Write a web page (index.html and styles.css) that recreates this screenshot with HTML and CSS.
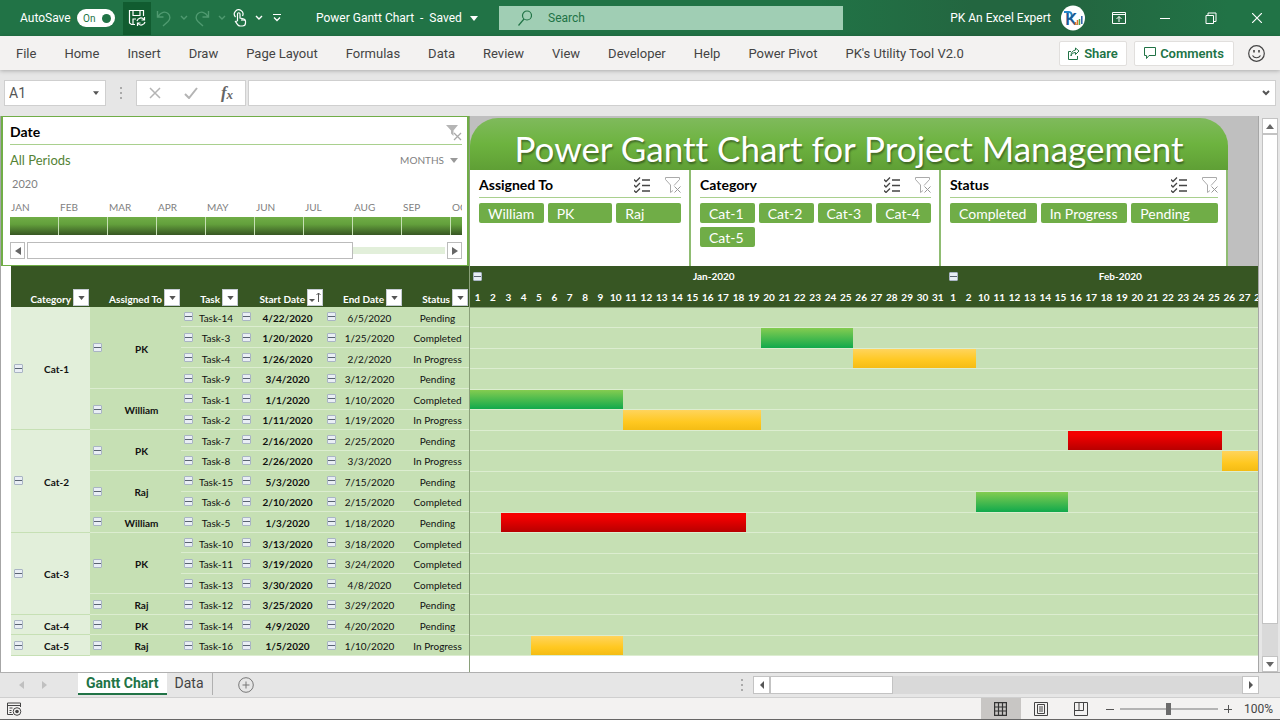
FILE: index.html
```html
<!DOCTYPE html>
<html lang="en">
<head>
  <meta charset="UTF-8">
  <title>Power Gantt Chart</title>
  <link rel="stylesheet" href="styles.css">
</head>
<body>

<svg class="defs" aria-hidden="true">
  <symbol id="chevron" viewBox="0 0 8 6"><path d="M1 1l3 3 3-3" fill="none" stroke="currentColor" stroke-width="1.4"/></symbol>
  <symbol id="arrow" viewBox="0 0 8 5"><path d="M0 0h8L4 5z" fill="currentColor"/></symbol>
  <symbol id="checks" viewBox="0 0 16 16">
    <path d="M0 2.500l2 2L6 .5M0 8l2 2 4-4M0 13.500l2 2 4-4M8 3h8M8 8.500h8M8 14h8" fill="none" stroke="#444" stroke-width="1.3"/>
  </symbol>
  <symbol id="funnel" viewBox="0 0 16 16">
    <path d="M.5.5h14v2L9 8.500M.5.5v2L5.500 8v7.500L8 13.500" fill="none" stroke="#aaa"/>
    <path d="M9.500 9.500l6 6M15.500 9.500l-6 6" stroke="#999"/>
  </symbol>
</svg>

<header class="titlebar">
  <div class="quick">
    <label for="autosave">AutoSave</label>
    <span class="switch"><input type="checkbox" id="autosave" checked><span>On</span></span>
    <button class="save" aria-label="Save">
      <svg width="18" height="18" viewBox="0 0 18 18" fill="none" stroke="#fff" stroke-width="1.2">
        <path d="M7 15.500H3.500L1.500 14V1.500h14V7M5 1.500v5h7v-5M5 15v-5h3"/>
        <path d="M9 12a4 4 0 0 1 7-1.500M16.500 8v3h-3M17 13a4 4 0 0 1-7 1.500M9.500 17v-3h3"/>
      </svg>
    </button>
    <button class="dim" aria-label="Undo">
      <svg width="16" height="17" viewBox="0 0 16 17" fill="none" stroke="currentColor" stroke-width="1.4"><path d="M1.500 1v6h6M2 6.500C5 2 9 1 12 3.500s2 6 0 8L7 16"/></svg>
      <svg width="8" height="6"><use href="#chevron"/></svg>
    </button>
    <button class="dim" aria-label="Redo">
      <svg width="16" height="17" viewBox="0 0 16 17" fill="none" stroke="currentColor" stroke-width="1.4"><path d="M14.500 1v6h-6M14 6.500C11 2 7 1 4 3.500s-2 6 0 8L9 16"/></svg>
      <svg width="8" height="6"><use href="#chevron"/></svg>
    </button>
    <button class="touch" aria-label="Touch mode">
      <svg width="14" height="18" viewBox="0 0 14 18" fill="none" stroke="#fff" stroke-width="1.2">
        <path d="M2.500 8a4.300 4.300 0 1 1 7-1"/>
        <path d="M4.500 12V5a1.200 1.200 0 0 1 2.500 0v4l4 1c1 .3 1.500 1 1.500 2v2c0 2-1.500 3-3 3H7c-2 0-3-2-4.500-4.500L4.500 12M9 9.500V12M11 10v2"/>
      </svg>
      <svg width="8" height="6"><use href="#chevron"/></svg>
    </button>
    <button class="customize" aria-label="Customize toolbar">
      <svg width="8" height="8" viewBox="0 0 8 8"><path d="M0 .5h8" stroke="#fff"/><path d="M1 3.500l3 3 3-3" fill="none" stroke="#fff" stroke-width="1.300"/></svg>
    </button>
  </div>
  <button class="docname">Power Gantt Chart&nbsp; - &nbsp;Saved <svg width="8" height="5"><use href="#arrow"/></svg></button>
  <div class="search">
    <svg width="14" height="16" viewBox="0 0 14 16" fill="none" stroke="#217346" stroke-width="1.200"><circle cx="9" cy="5.500" r="4.500"/><path d="M6 9L.5 15.500"/></svg>
    <input type="text" placeholder="Search" aria-label="Search">
  </div>
  <div class="account">
    <span>PK An Excel Expert</span>
    <svg width="24" height="26" viewBox="0 0 24 26">
      <ellipse cx="12" cy="13" rx="12" ry="12.500" fill="#fff"/>
      <path d="M3 7h4c4-1 6 6 0 7" fill="none" stroke="#2386c8" stroke-width="2"/>
      <text x="4" y="20" font-family="Lato" font-size="17" font-weight="700" fill="#1c5a94">K</text>
      <path d="M14.500 20v-3M16.500 20v-5" stroke="#e2762a" stroke-width="1.500"/>
      <path d="M18.500 20v-6" stroke="#4ca64c" stroke-width="1.500"/>
      <path d="M20.800 19v-8" stroke="#2b5fa8" stroke-width="1.500"/>
    </svg>
  </div>
  <div class="window-buttons">
    <button aria-label="Ribbon display options"><svg width="14" height="12" viewBox="0 0 14 12" fill="none" stroke="#fff"><path d="M.5.5h13v11H.5zM.5 2.500h13M7 10V4.500M4.500 7L7 4.500 9.500 7"/></svg></button>
    <button aria-label="Minimize"><svg width="10" height="10" viewBox="0 0 10 10"><path d="M0 5.500h10" stroke="#fff"/></svg></button>
    <button aria-label="Restore"><svg width="12" height="12" viewBox="0 0 12 12" fill="none" stroke="#fff"><path d="M1 3.500h7.500v8H1zM3 3V1h8v8.500H9"/></svg></button>
    <button aria-label="Close"><svg width="10" height="10" viewBox="0 0 10 10"><path d="M0 0l10 10M10 0L0 10" stroke="#fff" stroke-width="1.200"/></svg></button>
  </div>
</header>

<nav class="ribbon">
  <a href="#">File</a>
  <a href="#">Home</a>
  <a href="#">Insert</a>
  <a href="#">Draw</a>
  <a href="#">Page Layout</a>
  <a href="#">Formulas</a>
  <a href="#">Data</a>
  <a href="#">Review</a>
  <a href="#">View</a>
  <a href="#">Developer</a>
  <a href="#">Help</a>
  <a href="#">Power Pivot</a>
  <a href="#">PK's Utility Tool V2.0</a>
  <div class="ribbon-right">
    <button class="share"><svg width="12" height="13" viewBox="0 0 12 13" fill="none" stroke="#217346"><path d="M3 4.500H.5v8h9V9M7.500 1L11 4 7.500 7.500v-2C5 5.500 3.500 7 3 9c0-3.500 1.500-5.500 4.500-6z"/></svg>Share</button>
    <button class="comments"><svg width="12" height="12" viewBox="0 0 12 12" fill="none" stroke="#217346"><path d="M.5.5h11v8H5l-2.500 3v-3h-2z"/></svg>Comments</button>
    <button class="smile" aria-label="Feedback"><svg width="17" height="17" viewBox="0 0 17 17" fill="none" stroke="#444" stroke-width="1.200"><circle cx="8.500" cy="8.500" r="7.800"/><path d="M4.500 10.500c2 3 6 3 8 0"/><path d="M6 5v2.500M11 5v2.500" stroke-width="1.600"/></svg></button>
  </div>
</nav>

<div class="formula-row">
  <div class="namebox">
    <input type="text" value="A1" aria-label="Name box">
    <svg width="6" height="4"><use href="#arrow"/></svg>
  </div>
  <svg class="grip" width="4" height="14" viewBox="0 0 4 14" fill="#aaa"><path d="M1 1h2v2H1zM1 6h2v2H1zM1 11h2v2H1z"/></svg>
  <div class="fx">
    <button aria-label="Cancel"><svg width="12" height="12" viewBox="0 0 12 12"><path d="M1 1l10 10M11 1L1 11" stroke="#b4b4b4" stroke-width="1.500"/></svg></button>
    <button aria-label="Enter"><svg width="14" height="12" viewBox="0 0 14 12"><path d="M1 7l4 4 8-10" fill="none" stroke="#b4b4b4" stroke-width="2"/></svg></button>
    <button aria-label="Insert function" class="fn">f<small>x</small></button>
  </div>
  <div class="formula">
    <input type="text" aria-label="Formula bar">
    <svg width="8" height="6"><path d="M1 1l3 3 3-3" fill="none" stroke="#555" stroke-width="2"/></svg>
  </div>
</div>

<main class="sheet">
  <section class="left-pane">
    <div class="timeline">
      <div class="panel-head">
        <h2>Date</h2>
        <button aria-label="Clear filter"><svg width="16" height="17" viewBox="0 0 16 17"><path d="M0 1h12L7.500 6.500V12L5 9.500v-3z" fill="#b5b5b5"/><path d="M8 9l7 7M15 9l-7 7" stroke="#aaa" stroke-width="1.300"/></svg></button>
      </div>
      <div class="period">
        <span class="all">All Periods</span>
        <button>MONTHS <svg width="8" height="5"><use href="#arrow"/></svg></button>
      </div>
      <div class="year">2020</div>
      <div class="months" id="months"></div>
      <div class="timeline-scroll">
        <button aria-label="Scroll left"><svg width="6" height="8"><path d="M6 0v8L0 4z" fill="#666"/></svg></button>
        <span class="thumb"></span>
        <span class="rest"></span>
        <button aria-label="Scroll right"><svg width="6" height="8"><path d="M0 0v8l6-4z" fill="#666"/></svg></button>
      </div>
    </div>
    <table class="pivot">
      <colgroup><col class="c-cat"><col class="c-who"><col class="c-task"><col class="c-start"><col class="c-end"><col class="c-status"></colgroup>
      <thead>
        <tr id="pivotHead"></tr>
      </thead>
      <tbody id="pivotBody"></tbody>
    </table>
  </section>

  <section class="right-pane">
    <div class="dashboard">
      <h1>Power Gantt Chart for Project Management</h1>
      <div class="slicers" id="slicers"></div>
    </div>
    <div class="gantt">
      <div class="gantt-head">
        <div class="month jan"><button class="toggle" aria-label="Collapse"></button><span>Jan-2020</span></div>
        <div class="month feb"><button class="toggle" aria-label="Collapse"></button><span>Feb-2020</span></div>
      </div>
      <div class="days" id="days"></div>
      <div class="bars" id="bars"></div>
    </div>
  </section>

  <div class="vscroll">
    <button aria-label="Scroll up"><svg width="8" height="5"><path d="M0 5h8L4 0z" fill="#666"/></svg></button>
    <span class="thumb"></span>
    <span class="rest"></span>
    <button aria-label="Scroll down"><svg width="8" height="5"><path d="M0 0h8L4 5z" fill="#666"/></svg></button>
  </div>
</main>

<div class="tabs">
  <button class="step" aria-label="Previous sheet"><svg width="5" height="8"><path d="M5 0v8L0 4z" fill="#c0c0c0"/></svg></button>
  <button class="step" aria-label="Next sheet"><svg width="5" height="8"><path d="M0 0v8l5-4z" fill="#c0c0c0"/></svg></button>
  <a href="#" class="tab active">Gantt Chart</a>
  <a href="#" class="tab">Data</a>
  <button class="add" aria-label="New sheet"><svg width="16" height="16" viewBox="0 0 16 16" fill="none" stroke="#777"><circle cx="8" cy="8" r="7.300"/><path d="M4.500 8h7M8 4.500v7"/></svg></button>
  <div class="hscroll">
    <svg class="grip" width="4" height="12" viewBox="0 0 4 12" fill="#aaa"><path d="M1 0h2v2H1zM1 5h2v2H1zM1 10h2v2H1z"/></svg>
    <button aria-label="Scroll left"><svg width="4" height="8"><path d="M4 0v8L0 4z" fill="#555"/></svg></button>
    <span class="thumb"></span>
    <span class="rest"></span>
    <button aria-label="Scroll right"><svg width="4" height="8"><path d="M0 0v8l4-4z" fill="#555"/></svg></button>
  </div>
</div>

<footer class="status">
  <button class="macro" aria-label="Record macro"><svg width="15" height="14" viewBox="0 0 15 14" fill="none" stroke="#444"><path d="M6 12.500H.5V1h13v4M.5 3.500h13M2.500 6h3M2.500 8.500h2M2.500 10.500h2"/><circle cx="10" cy="9.500" r="3.800"/><circle cx="10" cy="9.500" r="1.800" fill="#444" stroke="none"/></svg></button>
  <div class="views">
    <button class="on" aria-label="Normal"><svg width="13" height="14" viewBox="0 0 13 14" fill="none" stroke="#333" stroke-width="1.200"><path d="M.6.6h11.800v12.800H.6zM4.500 1v12M8.500 1v12M1 5h11M1 9h11"/></svg></button>
    <button aria-label="Page layout"><svg width="14" height="14" viewBox="0 0 14 14" fill="none" stroke="#444"><path d="M.5.5h13v13H.5zM3.500 2.500h7v9h-7zM5 5h4M5 7h4M5 9h4"/></svg></button>
    <button aria-label="Page break preview"><svg width="14" height="14" viewBox="0 0 14 14" fill="none" stroke="#444"><path d="M.5.5h13v13H.5zM1 8.500h8.500V1M5 1v7.500"/></svg></button>
  </div>
  <div class="zoom">
    <button aria-label="Zoom out"><svg width="8" height="8"><path d="M0 4.500h8" stroke="#555"/></svg></button>
    <input type="range" min="0" max="100" value="50" aria-label="Zoom">
    <button aria-label="Zoom in"><svg width="8" height="8"><path d="M0 4.500h8M4.500 0v8" stroke="#555"/></svg></button>
    <span>100%</span>
  </div>
</footer>

<script src="script.js"></script>
</body>
</html>
```
FILE: styles.css
```css
* {
  box-sizing: border-box;
}
body {
  margin: 0;
  height: 100vh;
  display: flex;
  flex-direction: column;
  overflow: hidden;
  font-family: Roboto, "Open Sans", sans-serif;
  font-size: 12px;
  color: #444;
  background: #e6e6e6;
}
button, input {
  font: inherit;
  color: inherit;
  border: none;
  background: none;
  padding: 0;
  margin: 0;
  outline: none;
}
button {
  display: flex;
  align-items: center;
  justify-content: center;
  flex: none;
}
a {
  color: inherit;
  text-decoration: none;
}
svg {
  display: block;
  flex: none;
}
.defs {
  position: absolute;
  width: 0;
  height: 0;
}

/* title bar */
.titlebar {
  display: flex;
  align-items: center;
  height: 36px;
  flex: none;
  color: #fff;
  background: linear-gradient(90deg, #217346 64%, #236640 76%, #236640 84%, #217346 96%);
}
.quick {
  display: flex;
  align-items: center;
  padding-left: 20px;
  width: 316px;
  flex: none;
}
.quick label {
  width: 57px;
}
.switch {
  display: flex;
  align-items: center;
  width: 38px;
  height: 18px;
  padding: 0 4px 0 6px;
  justify-content: space-between;
  border-radius: 9px;
  background: #fff;
  color: #217346;
  font-size: 10px;
}
.switch input {
  appearance: none;
  order: 2;
  width: 9px;
  height: 9px;
  border-radius: 50%;
  background: #217346;
}
.save {
  width: 28px;
  height: 33px;
  margin-left: 8px;
  background: #115c30;
}
.dim, .touch {
  width: 38px;
  gap: 8px;
  color: #4f9a70;
}
.dim {
  margin-left: 2px;
}
.dim + .dim {
  margin-left: 0;
}
.touch {
  color: #fff;
}
.customize {
  width: 20px;
}
.docname {
  width: 183px;
  justify-content: flex-start;
  gap: 8px;
  white-space: nowrap;
}
.search {
  display: flex;
  align-items: center;
  flex: 1;
  max-width: 344px;
  height: 24px;
  padding-left: 19px;
  gap: 16px;
  background: #a0ceb4;
}
.search input {
  flex: 1;
  min-width: 0;
  color: #217346;
}
.search input::placeholder {
  color: #217346;
}
.account {
  display: flex;
  align-items: center;
  gap: 10px;
  margin-left: auto;
}
.window-buttons {
  display: flex;
  padding-left: 11px;
}
.window-buttons button {
  width: 46px;
  height: 36px;
}

/* ribbon tabs */
.ribbon {
  display: flex;
  align-items: center;
  height: 34px;
  flex: none;
  padding: 0 15px 0 2px;
  background: #f3f2f1;
  font-size: 13px;
  box-shadow: 0 1px 4px rgba(0,0,0,0.25);
}
.ribbon a {
  padding: 0 14px;
  white-space: nowrap;
}
.ribbon-right {
  display: flex;
  align-items: center;
  margin-left: auto;
}
.share, .comments {
  height: 25px;
  gap: 4px;
  border: 1px solid #e1dfdd;
  border-radius: 2px;
  background: #fff;
  color: #217346;
  font-weight: 600;
}
.share {
  width: 68px;
}
.comments {
  width: 100px;
  margin: 0 14px 0 7px;
}

/* formula bar */
.formula-row {
  display: flex;
  align-items: center;
  height: 46px;
  flex: none;
  padding: 0 4px;
  font-size: 14px;
}
.namebox, .fx, .formula {
  display: flex;
  align-items: center;
  height: 26px;
  border: 1px solid #cfcfcf;
  background: #fff;
}
.namebox {
  width: 102px;
  padding: 0 6px 0 4px;
  color: #555;
}
.namebox input, .formula input {
  flex: 1;
  min-width: 0;
}
.formula-row .grip {
  margin: 0 13px;
}
.fx {
  width: 110px;
}
.fx button {
  width: 36px;
}
.fx .fn {
  font: italic bold 17px "Liberation Serif", serif;
  color: #666;
}
.fx .fn small {
  font-size: 13px;
  padding-top: 4px;
}
.formula {
  flex: 1;
  margin-left: 2px;
  padding-right: 5px;
}

/* sheet */
.sheet {
  display: flex;
  flex: 1;
  min-height: 0;
  font-family: Lato, sans-serif;
  border-bottom: 1px solid #b0b0b0;
}
.left-pane {
  display: flex;
  flex-direction: column;
  width: 470px;
  flex: none;
  border-left: 1px solid #a6a6a6;
  border-right: 1px solid #8aa07a;
  background: #fff;
}
.right-pane {
  flex: 1;
  min-width: 0;
  overflow: hidden;
  border-right: 1px solid #a6a6a6;
  background: #fff;
}

/* date timeline */
.timeline {
  height: 150px;
  flex: none;
  padding: 3px 5px 0 7px;
  border: 2px solid #70ad47;
  border-top-width: 1px;
  border-bottom-width: 1px;
}
.panel-head {
  display: flex;
  align-items: center;
  height: 25px;
  border-bottom: 1px solid #a9d08e;
}
.panel-head h2 {
  flex: 1;
  margin: 0;
  font-size: 14px;
  line-height: 16px;
  color: #000;
}
.period {
  display: flex;
  align-items: center;
  justify-content: space-between;
  height: 30px;
  padding-right: 4px;
  font-size: 13px;
}
.period .all {
  color: #548235;
}
.period button {
  gap: 6px;
  font-size: 10px;
  color: #7f7f7f;
}
.period svg {
  color: #999;
}
.year {
  padding-left: 2px;
  height: 18px;
  line-height: 18px;
  font-size: 11px;
  color: #7f7f7f;
}
.months {
  display: flex;
  overflow: hidden;
}
.months div {
  width: 49px;
  flex: none;
  font-size: 10px;
  line-height: 16px;
  padding-top: 6px;
  color: #7f7f7f;
}
.months span {
  padding-left: 1px;
}
.months i {
  display: block;
  height: 18px;
  margin-top: 2px;
  border-right: 1px solid #c6e0b4;
  background: linear-gradient(#70ad47, #63a03c 40%, #375623);
}
.timeline-scroll {
  display: flex;
  align-items: center;
  margin-top: 7px;
}
.timeline-scroll button {
  width: 15px;
  height: 17px;
  border: 1px solid #bbb;
}
.timeline-scroll .thumb {
  flex: 78;
  height: 17px;
  margin-left: 2px;
  border: 1px solid #bbb;
}
.timeline-scroll .rest {
  flex: 22;
  height: 7px;
  margin-right: 2px;
  background: #e2efda;
}

/* pivot table */
.pivot {
  width: 458px;
  height: 390px;
  margin-left: 10px;
  table-layout: fixed;
  border-collapse: collapse;
  font-size: 10px;
  color: #111;
}
.c-cat { width: 79px; }
.c-who { width: 91px; }
.c-task { width: 58px; }
.c-start { width: 85px; }
.c-end { width: 79px; }
.c-status { width: 66px; }
.pivot th, .pivot td {
  padding: 0;
}
.pivot thead th {
  height: 41px;
  vertical-align: bottom;
  background: #375623;
  color: #fff;
}
.th {
  display: flex;
  align-items: flex-end;
  justify-content: flex-end;
  gap: 2px;
  padding: 0 1px 1px 0;
  line-height: 14px;
  white-space: nowrap;
}
.filter {
  width: 16px;
  height: 17px;
  border: 1px solid #c5cbd3;
  background: #fff;
  color: #555;
}
.pivot tbody td, .pivot tbody th {
  background: #c6e0b4;
  border-bottom: 1px solid #dcedd0;
}
.pivot tbody .cat {
  background: #e2efda;
  border-bottom-color: #c6e0b4;
}
.pivot tbody .start {
  font-weight: bold;
}
.cell {
  display: flex;
  align-items: center;
  padding-left: 3px;
  line-height: 14px;
}
.cell span {
  flex: 1;
  padding-top: 2px;
  text-align: center;
  white-space: nowrap;
}
.toggle {
  width: 9px;
  height: 9px;
  border: 1px solid #a9b4c4;
  border-radius: 1px;
  background: linear-gradient(#e9eef5 3px, #5a6472 3px, #5a6472 4px, #e9eef5 4px);
}

/* banner and slicers */
.dashboard {
  height: 150px;
  padding-top: 2px;
  background: #bfbfbf;
}
.dashboard h1 {
  width: 758px;
  height: 52px;
  margin: 0;
  border-radius: 28px 28px 0 0;
  background: linear-gradient(#7fba5c, #6db33f 50%, #5f9f35);
  color: #fff;
  font-size: 35px;
  font-weight: 400;
  font-variant-ligatures: none;
  line-height: 60px;
  text-align: center;
  text-shadow: 1px 2px 2px rgba(0,0,0,0.4);
  white-space: nowrap;
}
.slicers {
  display: flex;
  width: 758px;
}
.slicer {
  height: 96px;
  padding: 2px 8px 0 9px;
  border-right: 2px solid #8fbc72;
  background: #fff;
}
.slicer:nth-child(1) { width: 221px; }
.slicer:nth-child(2) { width: 250px; }
.slicer:nth-child(3) { width: 287px; }
.slicer .panel-head {
  height: 26px;
  gap: 15px;
}
.items {
  display: grid;
  gap: 4px;
  padding-top: 5px;
}
.cols-3 { grid-template-columns: repeat(3, 1fr); }
.cols-4 { grid-template-columns: repeat(4, 1fr); }
.items button {
  height: 20px;
  padding-left: 9px;
  justify-content: flex-start;
  border-radius: 2px;
  background: #70ad47;
  color: #fff;
  font-size: 14px;
}

/* gantt */
.gantt {
  width: 813px;
}
.gantt-head, .days, .bars {
  display: grid;
  grid-template-columns: repeat(53, 1fr);
}
.gantt-head, .days {
  background: #375623;
  color: #fff;
  font-size: 10px;
  font-weight: bold;
  text-align: center;
}
.gantt-head {
  height: 20px;
}
.days {
  height: 21px;
  line-height: 22px;
}
.month {
  display: flex;
  align-items: center;
  padding-left: 3px;
}
.month span {
  flex: 1;
}
.jan { grid-column: span 31; }
.feb { grid-column: span 22; }
.bars {
  height: 349px;
  grid-template-rows: repeat(17, 1fr);
  border-top: 1px solid #8aa07a;
}
.line {
  grid-column: 1 / -1;
  background: #c6e0b4;
  border-bottom: 1px solid #dcedd0;
}
.done, .progress, .pending {
  margin-bottom: 1px;
}
.done { background: linear-gradient(#84cc50, #10a94c); }
.progress { background: linear-gradient(#ffd45c, #ffc820 60%, #f4bc14); }
.pending { background: linear-gradient(#f40000 20%, #b80000); }

/* scrollbars */
.vscroll {
  display: flex;
  flex-direction: column;
  width: 21px;
  flex: none;
  padding: 2px 2px 0 3px;
}
.vscroll button, .vscroll .thumb, .hscroll button, .hscroll .thumb {
  border: 1px solid #c3c3c3;
  background: #fff;
}
.vscroll button {
  height: 16px;
}
.vscroll .thumb {
  flex: 490;
}
.vscroll .rest {
  flex: 32;
  background: #d9d9d9;
}

/* sheet tabs */
.tabs {
  display: flex;
  height: 24px;
  flex: none;
  padding-left: 10px;
  font-size: 14px;
}
.step {
  width: 23px;
}
.tab {
  padding: 0 8px;
  line-height: 20px;
  height: 22px;
}
.tab.active {
  margin-left: 22px;
  background: #fff;
  border-bottom: 2px solid #217346;
  color: #217346;
  font-weight: 700;
}
.tab:not(.active) {
  border-right: 1px solid #b0b0b0;
}
.add {
  margin-left: 25px;
}
.hscroll {
  display: flex;
  align-items: center;
  width: 540px;
  margin-left: auto;
  padding-right: 21px;
}
.hscroll .grip {
  margin-right: 9px;
}
.hscroll button {
  width: 17px;
  height: 18px;
}
.hscroll .thumb {
  flex: 122;
  height: 18px;
}
.hscroll .rest {
  flex: 352;
  height: 18px;
  background: #d9d9d9;
}

/* status bar */
.status {
  display: flex;
  align-items: center;
  height: 23px;
  flex: none;
  padding: 0 7px 0 7px;
  border-top: 1px solid #cfcfcf;
  border-bottom: 1px solid #666;
  background: #f3f2f1;
}
.views {
  display: flex;
  margin-left: auto;
}
.views button {
  width: 40px;
  height: 21px;
}
.views .on {
  background: #c8c6c4;
}
.zoom {
  display: flex;
  align-items: center;
  margin-left: 5px;
}
.zoom input {
  appearance: none;
  width: 98px;
  height: 14px;
  margin: 0 6px;
  background: linear-gradient(#b4b4b4, #b4b4b4) center / 100% 2px no-repeat;
}
.zoom input::-webkit-slider-thumb {
  appearance: none;
  width: 5px;
  height: 12px;
  background: #6b6b6b;
}
.zoom span {
  margin-left: 12px;
}
```
FILE: script.js
```js
// category, assigned to, task, start, end, status, first chart column, column count
const tasks = [
  ['Cat-1', 'PK', 'Task-14', '4/22/2020', '6/5/2020', 'Pending'],
  ['Cat-1', 'PK', 'Task-3', '1/20/2020', '1/25/2020', 'Completed', 20, 6],
  ['Cat-1', 'PK', 'Task-4', '1/26/2020', '2/2/2020', 'In Progress', 26, 8],
  ['Cat-1', 'PK', 'Task-9', '3/4/2020', '3/12/2020', 'Pending'],
  ['Cat-1', 'William', 'Task-1', '1/1/2020', '1/10/2020', 'Completed', 1, 10],
  ['Cat-1', 'William', 'Task-2', '1/11/2020', '1/19/2020', 'In Progress', 11, 9],
  ['Cat-2', 'PK', 'Task-7', '2/16/2020', '2/25/2020', 'Pending', 40, 10],
  ['Cat-2', 'PK', 'Task-8', '2/26/2020', '3/3/2020', 'In Progress', 50, 4],
  ['Cat-2', 'Raj', 'Task-15', '5/3/2020', '7/15/2020', 'Pending'],
  ['Cat-2', 'Raj', 'Task-6', '2/10/2020', '2/15/2020', 'Completed', 34, 6],
  ['Cat-2', 'William', 'Task-5', '1/3/2020', '1/18/2020', 'Pending', 3, 16],
  ['Cat-3', 'PK', 'Task-10', '3/13/2020', '3/18/2020', 'Completed'],
  ['Cat-3', 'PK', 'Task-11', '3/19/2020', '3/24/2020', 'Completed'],
  ['Cat-3', 'PK', 'Task-13', '3/30/2020', '4/8/2020', 'Completed'],
  ['Cat-3', 'Raj', 'Task-12', '3/25/2020', '3/29/2020', 'Pending'],
  ['Cat-4', 'PK', 'Task-14', '4/9/2020', '4/20/2020', 'Pending'],
  ['Cat-5', 'Raj', 'Task-16', '1/5/2020', '1/10/2020', 'In Progress', 5, 6]
];

const slicers = [
  { title: 'Assigned To', cols: 3, items: ['William', 'PK', 'Raj'] },
  { title: 'Category', cols: 4, items: ['Cat-1', 'Cat-2', 'Cat-3', 'Cat-4', 'Cat-5'] },
  { title: 'Status', cols: 3, items: ['Completed', 'In Progress', 'Pending'] }
];

const barClass = { 'Completed': 'done', 'In Progress': 'progress', 'Pending': 'pending' };
const toggle = '<button class="toggle" aria-label="Collapse"></button>';

function cell(text) {
  return `<div class="cell">${toggle}<span>${text}</span></div>`;
}

function drawHead() {
  const names = ['Category', 'Assigned To', 'Task', 'Start Date', 'End Date', 'Status'];
  const arrow = '<svg width="7" height="4"><use href="#arrow"/></svg>';
  const sorted = '<svg width="13" height="12" viewBox="0 0 13 12"><path d="M0 7h6L3 10z" fill="#555"/><path d="M9.500 10V1M7.500 3l2-2 2 2" fill="none" stroke="#555"/></svg>';
  document.getElementById('pivotHead').innerHTML = names.map(n =>
    `<th><div class="th">${n}<button class="filter" aria-label="Filter ${n}">${n === 'Start Date' ? sorted : arrow}</button></div></th>`
  ).join('');
}

function drawRows() {
  let rows = '';
  let bars = '';
  tasks.forEach((t, i) => {
    const prev = tasks[i - 1];
    rows += '<tr>';
    if (!prev || prev[0] !== t[0]) {
      const span = tasks.filter(x => x[0] === t[0]).length;
      rows += `<th class="cat" rowspan="${span}">${cell(t[0])}</th>`;
    }
    if (!prev || prev[0] !== t[0] || prev[1] !== t[1]) {
      const span = tasks.filter(x => x[0] === t[0] && x[1] === t[1]).length;
      rows += `<th rowspan="${span}">${cell(t[1])}</th>`;
    }
    rows += `<td>${cell(t[2])}</td><td class="start">${cell(t[3])}</td><td>${cell(t[4])}</td><td><div class="cell"><span>${t[5]}</span></div></td></tr>`;

    bars += `<div class="line" style="grid-row: ${i + 1}"></div>`;
    if (t[6]) {
      bars += `<div class="${barClass[t[5]]}" style="grid-row: ${i + 1}; grid-column: ${t[6]} / span ${t[7]}"></div>`;
    }
  });
  document.getElementById('pivotBody').innerHTML = rows;
  document.getElementById('bars').innerHTML = bars;
}

function drawDays() {
  let days = '';
  for (let d = 1; d <= 31; d++) days += `<span>${d}</span>`;
  for (let d = 1; d <= 29; d++) {
    if (d > 2 && d < 10) continue;
    days += `<span>${d}</span>`;
  }
  document.getElementById('days').innerHTML = days;
}

function drawSlicers() {
  document.getElementById('slicers').innerHTML = slicers.map(s => `
    <div class="slicer">
      <div class="panel-head">
        <h2>${s.title}</h2>
        <button aria-label="Multi-select"><svg width="16" height="16"><use href="#checks"/></svg></button>
        <button aria-label="Clear filter"><svg width="16" height="16"><use href="#funnel"/></svg></button>
      </div>
      <div class="items cols-${s.cols}">${s.items.map(x => `<button>${x}</button>`).join('')}</div>
    </div>`).join('');
}

const months = ['JAN', 'FEB', 'MAR', 'APR', 'MAY', 'JUN', 'JUL', 'AUG', 'SEP', 'OCT'];
document.getElementById('months').innerHTML = months.map(m => `<div><span>${m}</span><i></i></div>`).join('');

drawHead();
drawRows();
drawDays();
drawSlicers();
```
